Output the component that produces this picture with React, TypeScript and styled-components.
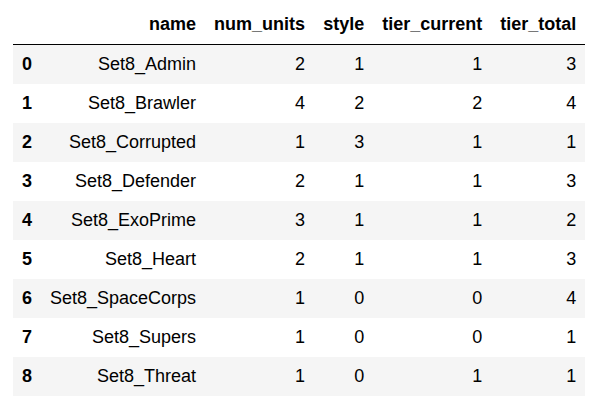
import React from "react";
import styled, { createGlobalStyle } from "styled-components";

const GlobalStyle = createGlobalStyle`
  html, body {
    margin: 0;
    padding: 0;
    background: #ffffff;
  }
  body {
    font-family: "Liberation Sans", Arial, sans-serif;
    color: #000000;
  }
`;

const Frame = styled.div`
  padding: 5px 0 0 13px;
`;

const Table = styled.table`
  border-collapse: collapse;
  border-spacing: 0;
  border: none;
  font-size: 18px;
  font-family: "Liberation Sans", Arial, sans-serif;
  color: #000000;
  table-layout: auto;
`;

const Head = styled.thead`
  border-bottom: 1px solid #000000;
  vertical-align: bottom;
`;

const HeadCell = styled.th`
  padding: 9px;
  line-height: normal;
  text-align: right;
  font-weight: bold;
  white-space: nowrap;
`;

const Row = styled.tr<{ $striped: boolean }>`
  background: ${(p) => (p.$striped ? "#f5f5f5" : "#ffffff")};
`;

const IndexCell = styled.th`
  padding: 9px;
  line-height: normal;
  text-align: left;
  font-weight: bold;
  vertical-align: middle;
`;

const Cell = styled.td`
  padding: 9px;
  line-height: normal;
  text-align: right;
  vertical-align: middle;
  white-space: nowrap;
`;

type Trait = {
  name: string;
  num_units: number;
  style: number;
  tier_current: number;
  tier_total: number;
};

const columns: (keyof Trait)[] = ["name", "num_units", "style", "tier_current", "tier_total"];

const data: Trait[] = [
  { name: "Set8_Admin", num_units: 2, style: 1, tier_current: 1, tier_total: 3 },
  { name: "Set8_Brawler", num_units: 4, style: 2, tier_current: 2, tier_total: 4 },
  { name: "Set8_Corrupted", num_units: 1, style: 3, tier_current: 1, tier_total: 1 },
  { name: "Set8_Defender", num_units: 2, style: 1, tier_current: 1, tier_total: 3 },
  { name: "Set8_ExoPrime", num_units: 3, style: 1, tier_current: 1, tier_total: 2 },
  { name: "Set8_Heart", num_units: 2, style: 1, tier_current: 1, tier_total: 3 },
  { name: "Set8_SpaceCorps", num_units: 1, style: 0, tier_current: 0, tier_total: 4 },
  { name: "Set8_Supers", num_units: 1, style: 0, tier_current: 0, tier_total: 1 },
  { name: "Set8_Threat", num_units: 1, style: 0, tier_current: 1, tier_total: 1 },
];

export default function App() {
  return (
    <>
      <GlobalStyle />
      <Frame>
        <Table>
          <Head>
            <tr>
              <HeadCell />
              {columns.map((c) => (
                <HeadCell key={c}>{c}</HeadCell>
              ))}
            </tr>
          </Head>
          <tbody>
            {data.map((row, i) => (
              <Row key={row.name} $striped={i % 2 === 0}>
                <IndexCell>{i}</IndexCell>
                {columns.map((c) => (
                  <Cell key={c}>{row[c]}</Cell>
                ))}
              </Row>
            ))}
          </tbody>
        </Table>
      </Frame>
    </>
  );
}
